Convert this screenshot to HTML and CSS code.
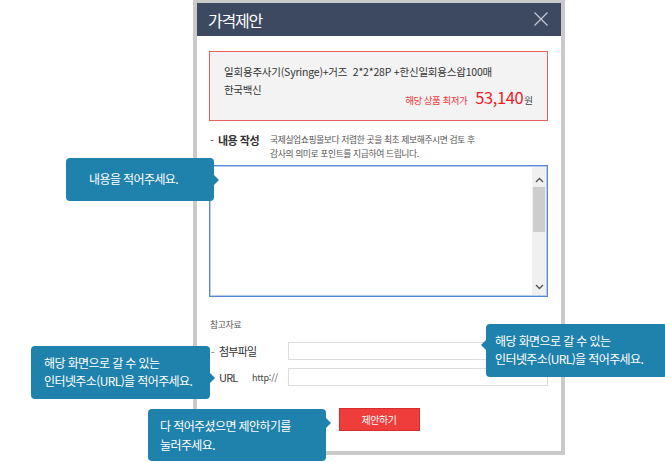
FILE: index.html
```html
<!DOCTYPE html>
<html lang="ko">
<head>
<meta charset="utf-8">
<title>가격제안</title>
<link rel="stylesheet" href="styles.css">
</head>
<body>
<div class="page">
  <div class="modal">
    <div class="header">
      <h1 class="title">가격제안</h1>
      <svg class="close" width="14" height="14" viewBox="0 0 14 14"><path d="M0.5 0.5 L13.5 13.5 M13.5 0.5 L0.5 13.5" stroke="#c3c8d1" stroke-width="1.2" fill="none"/></svg>
    </div>
    <div class="body">
      <div class="product">
        <div class="product-name">일회용주사기(Syringe)+거즈&nbsp; 2*2*28P +한신일회용스왑100매</div>
        <div class="product-row">
          <span class="maker">한국백신</span>
          <span class="price"><span class="price-label">해당 상품 최저가</span><span class="price-num">53,140</span><span class="price-unit">원</span></span>
        </div>
      </div>

      <div class="write-row">
        <div class="write-label"><span class="dash">-</span><b>내용 작성</b></div>
        <p class="write-desc">국제실업쇼핑몰보다 저렴한 곳을 최초 제보해주시면 검토 후<br>감사의 의미로 포인트를 지급하여 드립니다.</p>
      </div>

      <div class="textbox">
        <div class="textbox-area"></div>
        <div class="scrollbar">
          <svg class="arrow" width="9" height="6" viewBox="0 0 9 6"><path d="M1 5 L4.5 1.5 L8 5" stroke="#555" stroke-width="1.4" fill="none"/></svg>
          <div class="thumb"></div>
          <div class="track"></div>
          <svg class="arrow" width="9" height="6" viewBox="0 0 9 6"><path d="M1 1 L4.5 4.5 L8 1" stroke="#555" stroke-width="1.4" fill="none"/></svg>
        </div>
      </div>

      <div class="ref-title">참고자료</div>
      <div class="ref-row">
        <span class="dash small">-</span>
        <span class="ref-label">첨부파일</span>
        <span class="proto"></span>
        <span class="input"></span>
      </div>
      <div class="ref-row second">
        <span class="dash small">-</span>
        <span class="ref-label">URL</span>
        <span class="proto">http://</span>
        <span class="input"></span>
      </div>

      <div class="actions">
        <button class="submit" type="button">제안하기</button>
      </div>
    </div>
  </div>

  <div class="tip tip-content arrow-right">내용을 적어주세요.</div>
  <div class="tip tip-url-left arrow-right">해당 화면으로 갈 수 있는<br>인터넷주소(URL)을 적어주세요.</div>
  <div class="tip tip-url-right arrow-left">해당 화면으로 갈 수 있는<br>인터넷주소(URL)을 적어주세요.</div>
  <div class="tip tip-submit arrow-right">다 적어주셨으면 제안하기를<br>눌러주세요.</div>
</div>
</body>
</html>
```

FILE: styles.css
```css
* { box-sizing: border-box; }
html, body {
  margin: 0;
  padding: 0;
  background: #fff;
}
body {
  font-family: "Noto Sans CJK KR", "Noto Sans", sans-serif;
  color: #333;
}
.page {
  position: relative;
  width: 665px;
  height: 462px;
  overflow: hidden;
}
.modal {
  margin-left: 193px;
  width: 372px;
  height: 455px;
  border: 4px solid #cacaca;
  border-top-width: 3px;
  background: #fff;
}
.header {
  height: 33px;
  background: #3d4961;
  display: flex;
  align-items: center;
  justify-content: space-between;
  padding: 0 13px 0 11px;
}
.title {
  margin: 0;
  font-size: 16px;
  font-weight: 400;
  color: #fff;
  letter-spacing: -1.2px;
  line-height: 20px;
}
.close { display: block; margin-top: -2px; }

.body { padding: 15px 13px 0 12px; }

.product {
  height: 70px;
  border: 1px solid #ec5f5f;
  background: #f3f3f3;
  padding: 11px 14px 0 14px;
}
.product-name {
  font-size: 10.5px;
  line-height: 18px;
  color: #333;
  letter-spacing: -0.2px;
  white-space: nowrap;
}
.product-row {
  display: flex;
  justify-content: space-between;
  align-items: flex-start;
}
.maker {
  font-size: 10.5px;
  line-height: 18px;
  letter-spacing: -0.3px;
}
.price {
  display: flex;
  align-items: baseline;
  margin-top: 6px;
  color: #ee1d25;
  line-height: 20px;
}
.price-label {
  font-size: 9.5px;
  letter-spacing: -0.5px;
  color: #ee3a3f;
  margin-right: 8px;
}
.price-num {
  font-size: 16.5px;
  letter-spacing: -0.4px;
}
.price-unit {
  font-size: 9.5px;
  margin-left: 1px;
  color: #444;
}

.write-row {
  display: flex;
  margin-top: 12px;
}
.write-label {
  width: 61px;
  flex: none;
  font-size: 11px;
  line-height: 14px;
  letter-spacing: -0.5px;
  color: #333;
  white-space: nowrap;
}
.write-label .dash {
  display: inline-block;
  width: 9px;
  padding-left: 1px;
  font-weight: 400;
  color: #555;
}
.write-label b { font-weight: 700; }
.write-desc {
  margin: 0;
  font-size: 8.8px;
  line-height: 14px;
  letter-spacing: -0.4px;
  color: #555;
}

.textbox {
  margin-top: 4px;
  height: 132px;
  border: 1px solid #5a86d5;
  box-shadow: inset 0 0 0 1px #b7cbee;
  display: flex;
  padding: 1px;
}
.textbox-area { flex: 1; background: #fff; }
.scrollbar {
  width: 14px;
  background: #f0f0f0;
  display: flex;
  flex-direction: column;
  align-items: center;
  padding: 10px 0 5px;
}
.scrollbar .arrow { display: block; flex: none; }
.thumb {
  width: 12px;
  height: 45px;
  margin-top: 4px;
  background: #cdcdcd;
}
.track { flex: 1; }

.ref-title {
  margin-top: 21px;
  font-size: 8.8px;
  line-height: 14px;
  color: #555;
  letter-spacing: -0.3px;
  padding-left: 1px;
}
.ref-row {
  display: flex;
  align-items: center;
  height: 18px;
  margin-top: 10px;
  white-space: nowrap;
}
.ref-row.second { margin-top: 8px; }
.dash.small {
  flex: none;
  width: 10px;
  padding-left: 2px;
  font-size: 10px;
  color: #666;
}
.ref-label {
  flex: none;
  width: 33px;
  font-size: 11px;
  letter-spacing: -0.8px;
  color: #333;
}
.proto {
  flex: none;
  width: 36px;
  font-size: 9px;
  color: #444;
  letter-spacing: -0.2px;
}
.input {
  flex: 1;
  height: 18px;
  border: 1px solid #dcdcdc;
  background: #fff;
}

.actions {
  display: flex;
  justify-content: center;
  margin-top: 22px;
}
.submit {
  width: 81px;
  height: 23px;
  margin-left: 1px;
  background: #ef3d3c;
  border: 1px solid #d82b2b;
  color: #fff;
  font-family: "Noto Sans CJK KR", sans-serif;
  font-size: 10px;
  letter-spacing: -0.4px;
  padding: 0;
}

.tip {
  position: absolute;
  background: #1f82ad;
  color: #fff;
  border-radius: 4px;
  font-size: 12px;
  letter-spacing: -0.6px;
  line-height: 18px;
  white-space: nowrap;
}
.tip::after {
  content: "";
  position: absolute;
  border: 5px solid transparent;
}
.arrow-right::after {
  left: 100%;
  border-left-color: #1f82ad;
  border-right-width: 0;
}
.arrow-left::after {
  right: 100%;
  border-right-color: #1f82ad;
  border-left-width: 0;
}
.tip-content {
  left: 66px;
  top: 158px;
  width: 148px;
  height: 43px;
  padding: 12px 0 0 23px;
}
.tip-content::after { top: 17px; }
.tip-url-left {
  left: 31px;
  top: 346px;
  width: 179px;
  height: 53px;
  padding: 8px 0 0 13px;
}
.tip-url-left::after { top: 27px; }
.tip-url-right {
  left: 486px;
  top: 324px;
  width: 181px;
  height: 53px;
  padding: 8px 0 0 9px;
}
.tip-url-right::after { top: 16px; }
.tip-submit {
  left: 148px;
  top: 409px;
  width: 178px;
  height: 52px;
  padding: 7px 0 0 12px;
  line-height: 19px;
}
.tip-submit::after { top: 9px; }
```
